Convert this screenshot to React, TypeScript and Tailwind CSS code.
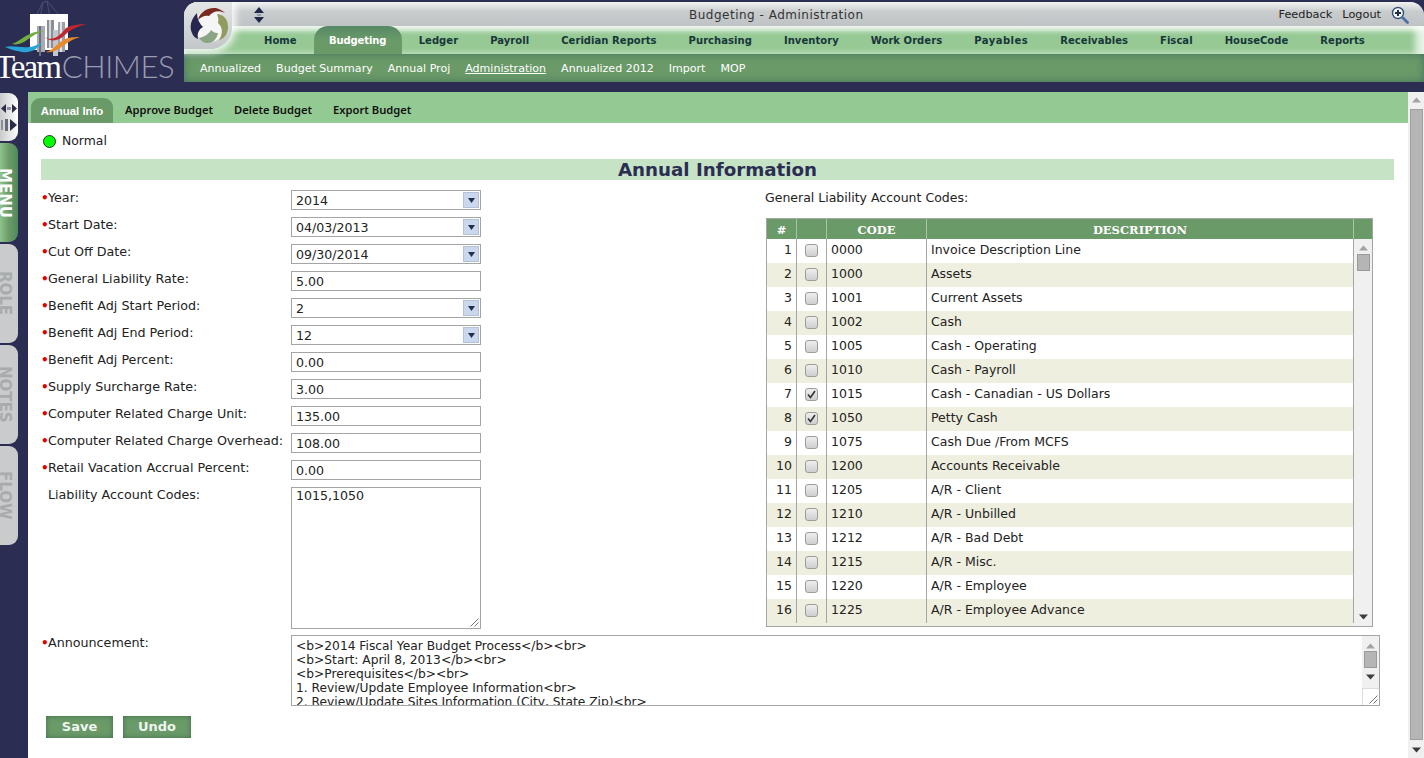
const NAV = ['Home', 'Budgeting', 'Ledger', 'Payroll', 'Ceridian Reports', 'Purchasing', 'Inventory', 'Work Orders', 'Payables', 'Receivables', 'Fiscal', 'HouseCode', 'Reports']
const SUBNAV = ['Annualized', 'Budget Summary', 'Annual Proj', 'Administration', 'Annualized 2012', 'Import', 'MOP']
const ACTIONS = ['Approve Budget', 'Delete Budget', 'Export Budget']

const FIELDS = [
  { label: 'Year:', value: '2014', select: true },
  { label: 'Start Date:', value: '04/03/2013', select: true },
  { label: 'Cut Off Date:', value: '09/30/2014', select: true },
  { label: 'General Liability Rate:', value: '5.00' },
  { label: 'Benefit Adj Start Period:', value: '2', select: true },
  { label: 'Benefit Adj End Period:', value: '12', select: true },
  { label: 'Benefit Adj Percent:', value: '0.00' },
  { label: 'Supply Surcharge Rate:', value: '3.00' },
  { label: 'Computer Related Charge Unit:', value: '135.00' },
  { label: 'Computer Related Charge Overhead:', value: '108.00' },
  { label: 'Retail Vacation Accrual Percent:', value: '0.00' },
]

const CODES = [
  ['0000', 'Invoice Description Line'],
  ['1000', 'Assets'],
  ['1001', 'Current Assets'],
  ['1002', 'Cash'],
  ['1005', 'Cash - Operating'],
  ['1010', 'Cash - Payroll'],
  ['1015', 'Cash - Canadian - US Dollars'],
  ['1050', 'Petty Cash'],
  ['1075', 'Cash Due /From MCFS'],
  ['1200', 'Accounts Receivable'],
  ['1205', 'A/R - Client'],
  ['1210', 'A/R - Unbilled'],
  ['1212', 'A/R - Bad Debt'],
  ['1215', 'A/R - Misc.'],
  ['1220', 'A/R - Employee'],
  ['1225', 'A/R - Employee Advance'],
]

const ANNOUNCEMENT = [
  '<b>2014 Fiscal Year Budget Process</b><br>',
  '<b>Start: April 8, 2013</b><br>',
  '<b>Prerequisites</b><br>',
  '1. Review/Update Employee Information<br>',
  '2. Review/Update Sites Information (City, State Zip)<br>',
]

function Arrow({ up, light }: { up?: boolean; light?: boolean }) {
  return (
    <svg width="9" height="6" viewBox="0 0 9 6" className="shrink-0">
      <path d={up ? 'M4.5 0.5 L9 5.5 L0 5.5 Z' : 'M0 0.5 L9 0.5 L4.5 5.5 Z'} fill={light ? '#a3a3a3' : '#3c3c3c'} />
    </svg>
  )
}

function Resizer() {
  return (
    <svg width="9" height="9" viewBox="0 0 9 9" className="absolute right-[1px] bottom-[1px]">
      <path d="M0.5 8.5 L8.5 0.5 M4.5 8.5 L8.5 4.5" stroke="#777" strokeWidth="1" />
    </svg>
  )
}

function Logo() {
  return (
    <div className="relative w-[184px] h-[82px] shrink-0 overflow-hidden">
      <svg width="100" height="60" viewBox="0 0 100 60" className="absolute left-0 top-0">
        <path d="M39 24 L43 2 L47 1 L50 18 M43 2 L36 16 M47 1 L60 16" stroke="#55577a" strokeWidth="0.8" fill="none" />
        <rect x="30" y="14" width="38" height="36" fill="#ffffff" />
        <rect x="37" y="26" width="8" height="26" fill="#a9abb4" />
        <rect x="39" y="26" width="2" height="30" fill="#6e707c" />
        <rect x="47" y="20" width="7" height="28" fill="#8b8d97" />
        <rect x="49" y="20" width="2" height="28" fill="#d7d8dc" />
        <rect x="53" y="30" width="5" height="26" fill="#c4c6cc" />
        <rect x="58" y="22" width="7" height="30" fill="#9fa1aa" />
        <rect x="60" y="22" width="2" height="30" fill="#e2e3e6" />
        <path d="M12 44 C22 40 30 30 44 31 C36 33 30 38 24 42 C20 44 16 45 12 44 Z" fill="#72ad3f" />
        <path d="M5 47 C16 44 28 52 42 42 C38 50 30 53 22 52 C15 51 10 49 5 47 Z" fill="#29a3d8" />
        <path d="M45 37 C52 42 60 36 66 28 C72 25 78 24 86 24 C76 27 70 30 66 34 C58 42 50 42 45 37 Z" fill="#c0272d" />
        <path d="M46 52 C54 50 60 40 68 38 C72 37 76 37 80 37 C72 39 66 44 60 48 C56 51 50 53 46 52 Z" fill="#e88a2a" />
      </svg>
      <div className="absolute left-[-5px] top-[50px] flex items-baseline whitespace-nowrap leading-[32px]">
        <span className="text-[33px] text-white tracking-[-2px] [font-family:'Liberation_Serif',serif]">Team</span>
        <span className="text-[31px] font-light text-[#9a9cb0] tracking-[-0.5px] ml-[2px] [font-family:Lato,sans-serif]">CHIMES</span>
      </div>
    </div>
  )
}

function Swirl() {
  return (
    <svg width="40" height="38" viewBox="0 0 40 38" className="absolute left-[6px] top-[5px]">
      <circle cx="20" cy="19" r="16" fill="#f4f5f4" />
      <path d="M8 13 C9 6 17 0 26 1 C30 2 33 4 35 6 C29 3 23 4 19 9 C15 8 11 10 8 13 Z" fill="#7b2a22" />
      <path d="M27 7 C33 7 38 12 38 20 C38 27 34 32 29 33 C33 27 33 20 28 16 C29 13 28 10 27 7 Z" fill="#8f9c5e" />
      <path d="M9 31 C14 30 19 27 21 23 C24 26 26 26 28 26 C27 31 24 36 17 36 C14 36 11 34 9 31 Z" fill="#8aa583" />
      <path d="M7 6 C1 12 -1 20 2 26 C3 29 5 31 8 32 C7 27 8 23 13 20 C10 17 7 12 7 6 Z" fill="#26264f" />
    </svg>
  )
}

function SideTab({ label, active }: { label: string; active?: boolean }) {
  return (
    <div className={`w-[18px] h-[99px] rounded-r-[9px] flex items-center overflow-hidden ${active ? 'bg-gradient-to-r from-[#8fc48e] via-[#6a9a68] to-[#4f8a5c]' : 'bg-[#c9cbcc]'}`}>
      <span className={`[writing-mode:vertical-rl] text-[15px] leading-[14px] w-[14px] font-bold -ml-[2px] ${active ? 'text-white' : 'text-[#a8abad]'}`}>
        {label}
      </span>
    </div>
  )
}

function Sidebar() {
  return (
    <div className="w-[28px] shrink-0 pt-[1px] flex flex-col gap-[2px]">
      <div className="w-[18px] h-[48px] rounded-r-[9px] bg-gradient-to-r from-[#c9cbcc] to-white flex flex-col items-center justify-center gap-[6px]">
        <svg width="16" height="9" viewBox="0 0 16 9">
          <path d="M0 4.5 L5 0 V9 Z M16 4.5 L11 0 V9 Z" fill="#2a2d45" />
          <rect x="6" y="3" width="4" height="3" fill="#8d8f9c" />
        </svg>
        <svg width="16" height="12" viewBox="0 0 16 12">
          <rect x="0" y="1" width="2" height="10" fill="#8d8f9c" />
          <rect x="4" y="0" width="3" height="12" fill="#6a6c78" />
          <path d="M9 0 L16 6 L9 12 Z" fill="#2a2d45" />
        </svg>
      </div>
      <SideTab label="MENU" active />
      <SideTab label="ROLE" />
      <SideTab label="NOTES" />
      <SideTab label="FLOW" />
    </div>
  )
}

function Header() {
  return (
    <div className="flex h-[92px] shrink-0 pt-[2px]">
      <div className="-mt-[2px]"><Logo /></div>
      <div className="relative flex-1 h-[80px] rounded-t-[14px] overflow-hidden bg-[#c3c7c9]">
        <div className="h-[24px] flex items-center bg-gradient-to-b from-[#f2f3f3] via-[#c9cccd] via-40% to-[#bfc3c5] pt-[2px]">
          <svg width="12" height="16" viewBox="0 0 12 16" className="ml-[69px] shrink-0">
            <path d="M6 0 L11 6 H1 Z M1 10 H11 L6 16 Z" fill="#20284a" />
            <path d="M4 7 H8 V9 H4 Z" fill="#8f97a8" />
          </svg>
          <span className="ml-[424px] text-[12px] tracking-[0.5px] text-[#333]">Budgeting - Administration</span>
          <div className="ml-auto flex items-center gap-[10px] text-[11.3px] text-[#222]">
            <span>Feedback</span>
            <span>Logout</span>
            <svg width="18" height="18" viewBox="0 0 18 18" className="mr-[15px] -mt-[1px]">
              <circle cx="7" cy="7" r="5.5" fill="#f4f6f8" stroke="#33507a" strokeWidth="1.4" />
              <path d="M4 7 H10 M7 4 V10" stroke="#1f2f4a" strokeWidth="2" />
              <path d="M11.5 11.5 L16.5 16.5" stroke="#4d6fa5" strokeWidth="2.8" strokeLinecap="round" />
            </svg>
          </div>
        </div>
        <div className="relative h-[28px] pl-[64px] flex bg-[#96c994] shadow-[inset_0_5px_5px_rgba(255,255,255,0.75),inset_-9px_0_6px_rgba(255,255,255,0.7)]">
          {NAV.map(item =>
            item === 'Budgeting' ? (
              <div key={item} className="h-[28px] w-[88px] mx-[1px] rounded-t-[14px] bg-gradient-to-b from-[#568866] via-[#6a9a68] to-[#6a9a68] flex items-center justify-center">
                <span className="text-[10px] tracking-[-0.1px] font-bold text-white">{item}</span>
              </div>
            ) : (
              <div key={item} className="h-[28px] px-[16px] flex items-center whitespace-nowrap">
                <span className={`text-[10px] font-bold text-[#17363a] ${item === 'Payables' ? 'tracking-[0.5px]' : 'tracking-[0.05px]'}`}>{item}</span>
              </div>
            )
          )}
        </div>
        <div className="h-[28px] pl-[16px] pt-[2px] flex items-center gap-[15px] bg-[#6a9a68] shadow-[inset_0_0_9px_#44735f]">
          {SUBNAV.map(item => (
            <span key={item} className={`text-[11.05px] text-white whitespace-nowrap ${item === 'Administration' ? 'underline' : ''}`}>{item}</span>
          ))}
        </div>
        {/* grey corner behind the swirl logo, over the nav row */}
        <div className="absolute left-0 top-0 w-[48px] h-[47px] rounded-br-[22px] bg-gradient-to-b from-[#e4e6e6] to-[#c3c7c9] shadow-[0_0_7px_4px_rgba(255,255,255,0.85)]" />
        <Swirl />
      </div>
    </div>
  )
}

function Label({ text, required }: { text: string; required?: boolean }) {
  return (
    <div className="w-[250px] shrink-0 flex text-[12.7px] leading-[16px] text-[#222] whitespace-nowrap">
      <span className="w-[7px] text-[#e00000] text-[12px] font-bold">{required ? '•' : ''}</span>
      <span>{text}</span>
    </div>
  )
}

function Field({ label, value, select }: { label: string; value: string; select?: boolean }) {
  return (
    <div className="flex h-[20px]">
      <Label text={label} required />
      <div className="relative w-[190px] h-[20px] border border-[#a5a5a5] bg-white flex items-center pl-[4px] text-[12.6px] leading-[20px] text-[#222]">
        <span className="pt-[1px]">{value}</span>
        {select && (
          <div className="absolute right-[1px] top-[1px] w-[16px] h-[16px] bg-[#c9d8ec] border border-[#b3c2d6] flex items-center justify-center">
            <svg width="7" height="5" viewBox="0 0 7 5"><path d="M0 0 H7 L3.5 5 Z" fill="#22304a" /></svg>
          </div>
        )}
      </div>
    </div>
  )
}

function Checkbox({ checked }: { checked: boolean }) {
  return (
    <div className="w-[13px] h-[13px] mt-[5px] rounded-[3px] border border-[#9c9c9c] bg-gradient-to-b from-[#eeeeee] to-[#cfcfcf] flex items-center justify-center">
      {checked && (
        <svg width="9" height="9" viewBox="0 0 9 9"><path d="M1 4.5 L3.5 7.5 L8 1" stroke="#333" strokeWidth="1.6" fill="none" /></svg>
      )}
    </div>
  )
}

function CodesTable() {
  return (
    <div className="ml-[1px] w-[607px] h-[409px] border border-[#a5a5a5] flex flex-col overflow-hidden">
      <div className="flex h-[20px] shrink-0 bg-[#6a9a68] text-white font-bold text-[11.5px] leading-[22px] text-center [font-family:'DejaVu_Serif',serif]">
        <div className="w-[30px] border-r border-[#a9c4a8]">#</div>
        <div className="w-[30px] border-r border-[#a9c4a8]" />
        <div className="w-[100px] border-r border-[#a9c4a8]">CODE</div>
        <div className="w-[427px] border-r border-[#a9c4a8]">DESCRIPTION</div>
        <div className="flex-1" />
      </div>
      <div className="flex flex-1 min-h-0">
        <div className="w-[587px] flex flex-col overflow-hidden">
          {CODES.map(([code, desc], i) => (
            <div key={code} className={`flex h-[24px] shrink-0 text-[12.5px] leading-[21px] text-[#222] ${i % 2 ? 'bg-[#efefdf]' : 'bg-white'}`}>
              <div className="w-[30px] border-r border-[#a5a5a5] text-right pr-[4px]">{i + 1}</div>
              <div className="w-[30px] border-r border-[#a5a5a5] flex justify-center"><Checkbox checked={code === '1015' || code === '1050'} /></div>
              <div className="w-[100px] border-r border-[#a5a5a5] pl-[4px]">{code}</div>
              <div className="w-[427px] border-r border-[#a5a5a5] pl-[4px]">{desc}</div>
            </div>
          ))}
          <div className="flex flex-1 bg-[#efefdf]" />
        </div>
        <div className="flex-1 bg-[#f0f0f0] flex flex-col items-center pt-[6px] pb-[6px]">
          <Arrow up light />
          <div className="w-[13px] h-[17px] mt-[3px] bg-[#b5b5b5] border border-[#9a9a9a]" />
          <div className="mt-auto"><Arrow /></div>
        </div>
      </div>
    </div>
  )
}

function AnnouncementBox() {
  return (
    <div className="relative flex-1 h-[71px] border border-[#a5a5a5] flex overflow-hidden">
      <div className="flex-1 pl-[4px] pt-[3px] text-[12.25px] leading-[14px] text-[#222] whitespace-nowrap overflow-hidden">
        {ANNOUNCEMENT.map(line => <div key={line}>{line}</div>)}
      </div>
      <div className="w-[17px] flex flex-col">
        <div className="flex-1 bg-[#f0f0f0] flex flex-col items-center pt-[7px]">
          <Arrow up light />
          <div className="w-[13px] h-[17px] mt-[2px] bg-[#b5b5b5] border border-[#9a9a9a]" />
          <div className="mt-[6px]"><Arrow /></div>
        </div>
        <div className="h-[17px] border-l border-t border-[#dddddd] bg-white" />
      </div>
      <Resizer />
    </div>
  )
}

function GreenButton({ label, width }: { label: string; width: string }) {
  return (
    <button className={`${width} h-[22px] bg-[#6a9a68] shadow-[inset_0_0_5px_#3d6b4d] text-[13px] font-bold text-[#eef5ee]`}>
      {label}
    </button>
  )
}

function PageScrollbar() {
  return (
    <div className="w-[16px] shrink-0 bg-[#f0f0f0] flex flex-col items-center pt-[5px] pb-[5px]">
      <Arrow up light />
      <div className="w-[13px] flex-1 mt-[6px] mb-[7px] bg-[#b5b5b5] border border-[#9f9f9f]" />
      <Arrow />
    </div>
  )
}

export default function App() {
  return (
    <div className="w-[1424px] h-[758px] overflow-hidden flex flex-col bg-[#2b2d53] [font-family:'DejaVu_Sans',sans-serif]">
      <Header />
      <div className="flex flex-1 min-h-0">
        <Sidebar />
        <div className="flex-1 min-w-0 bg-white flex flex-col">
          <div className="h-[31px] shrink-0 bg-[#93c992] flex items-end pl-[3px]">
            <div className="w-[82px] h-[25px] pt-[3px] rounded-t-[9px] bg-[#6a9a68] flex items-center justify-center text-[11.4px] font-bold text-white [font-family:'Liberation_Sans',sans-serif]">
              Annual Info
            </div>
            <div className="flex items-center gap-[21px] ml-[12px] h-[26px] text-[11.2px] font-semibold text-[#111] [font-family:'Noto_Sans',sans-serif]">
              {ACTIONS.map(item => <span key={item}>{item}</span>)}
            </div>
          </div>
          <div className="h-[36px] shrink-0 pl-[15px] flex items-center gap-[6px] text-[12.4px] text-[#222]">
            <div className="w-[13px] h-[13px] rounded-full bg-[#00ff00] border border-[#1a3a1a]" />
            <span>Normal</span>
          </div>
          <div className="ml-[13px] mr-[14px] h-[21px] shrink-0 bg-[#c6e4c5] text-center text-[18.25px] leading-[21px] font-bold text-[#2b2d53]">
            Annual Information
          </div>
          <div className="flex pl-[13px] pt-[10px]">
            <div className="w-[724px] shrink-0 flex flex-col gap-[7px]">
              {FIELDS.map(f => <Field key={f.label} {...f} />)}
              <div className="flex">
                <Label text="Liability Account Codes:" />
                <div className="relative w-[190px] h-[142px] border border-[#a5a5a5] pl-[4px] pt-[1px] text-[12.6px] leading-[14px] text-[#222]">
                  1015,1050
                  <Resizer />
                </div>
              </div>
            </div>
            <div className="flex flex-col">
              <div className="text-[12.5px] leading-[16px] text-[#222] h-[28px]">General Liability Account Codes:</div>
              <CodesTable />
            </div>
          </div>
          <div className="flex pl-[13px] pr-[28px] mt-[6px]">
            <Label text="Announcement:" required />
            <AnnouncementBox />
          </div>
          <div className="flex gap-[10px] pl-[18px] mt-[10px]">
            <GreenButton label="Save" width="w-[67px]" />
            <GreenButton label="Undo" width="w-[68px]" />
          </div>
        </div>
        <PageScrollbar />
      </div>
    </div>
  )
}
